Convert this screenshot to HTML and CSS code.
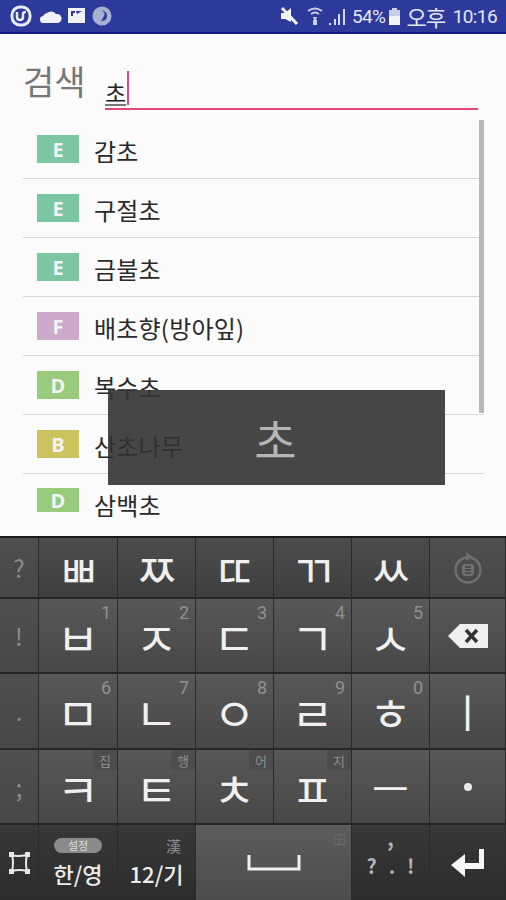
FILE: index.html
```html
<!DOCTYPE html>
<html>

<head>
    <title>검색</title>
    <link rel="stylesheet" href="styles.css">
</head>

<body>
    <!-- Status bar -->
    <header class="status-bar">
        <div class="status-left">
            <svg class="icon" width="22" height="24" viewBox="0 0 22 24">
                <rect x="2" y="3" width="18" height="18" rx="8" fill="none" stroke="#e8ebf6" stroke-width="3"/>
                <path d="M7 8v5q0 3 3 3t3-3V10q0-2 3-2" fill="none" stroke="#e8ebf6" stroke-width="2.500"/>
            </svg>
            <svg class="icon cloud" width="22" height="24" viewBox="0 0 22 24">
                <path d="M4 19a3.500 3.500 0 0 1-1-7 5 5 0 0 1 4-3 6 6 0 0 1 9 1 4.500 4.500 0 0 1 2 9z" fill="#f2f3fa"/>
            </svg>
            <svg class="icon picture" width="19" height="24" viewBox="0 0 19 24">
                <rect x="1" y="4" width="17" height="15" fill="#f2f3fa"/>
                <path d="M4 7h4v2H6v3H4zM9 7h6l-5 3z" fill="#2d3a9c"/>
            </svg>
            <svg class="icon" width="20" height="24" viewBox="0 0 20 24">
                <circle cx="10" cy="12" r="9.500" fill="#a9b0d0"/>
                <path d="M9 6q5 2 3 6t-3 5q6 0 6-5t-6-6z" fill="#2d3a9c"/>
            </svg>
        </div>
        <div class="status-right">
            <svg class="icon mute" width="20" height="22" viewBox="0 0 20 22">
                <path d="M2 8h4l6-5v14l-6-3H2z" fill="#f2f3fa"/>
                <path d="M3 3l15 16" stroke="#f2f3fa" stroke-width="3"/>
            </svg>
            <svg class="icon wifi" width="16" height="22" viewBox="0 0 16 22">
                <path d="M1 6q7-5 14 0M4 9q4-3 8 0" fill="none" stroke="#c9cee6" stroke-width="2"/>
                <path d="M6 12h4l-1 3h1v5H6v-5h1z" fill="#c9cee6"/>
            </svg>
            <svg class="icon signal" width="18" height="22" viewBox="0 0 18 22">
                <path d="M1 18h2v2H1zM6 14h2v6H6zM10 9h2v11h-2zM15 4h2v16h-2z" fill="#d5d8ec"/>
            </svg>
            <span class="status-text">54%</span>
            <svg class="icon battery" width="13" height="22" viewBox="0 0 13 22">
                <path d="M4 3h5v2H4z" fill="#c9cee6"/>
                <rect x="1" y="5" width="11" height="15" fill="#c9cee6"/>
                <rect x="1" y="11" width="11" height="9" fill="#f4f5fb"/>
            </svg>
            <span class="status-text meridiem">오후</span>
            <span class="status-text">10:16</span>
        </div>
    </header>

    <!-- Search -->
    <main class="content">
        <div class="search">
            <span class="search-label">검색</span>
            <div class="search-input"><span class="composing">초</span><span class="cursor"></span></div>
        </div>

        <ul class="result-list">
            <li class="result"><span class="badge badge-e">E</span><span class="name">감초</span></li>
            <li class="result"><span class="badge badge-e">E</span><span class="name">구절초</span></li>
            <li class="result"><span class="badge badge-e">E</span><span class="name">금불초</span></li>
            <li class="result"><span class="badge badge-f">F</span><span class="name">배초향(방아잎)</span></li>
            <li class="result"><span class="badge badge-d">D</span><span class="name">복수초</span></li>
            <li class="result"><span class="badge badge-b">B</span><span class="name">산초나무</span></li>
            <li class="result"><span class="badge badge-d">D</span><span class="name">삼백초</span></li>
        </ul>

        <div class="scrollbar"></div>
        <div class="key-preview">초</div>
    </main>

    <!-- Keyboard -->
    <section class="keyboard">
        <div class="key side">?</div>
        <div class="key double">ㅃ</div>
        <div class="key double">ㅉ</div>
        <div class="key double">ㄸ</div>
        <div class="key double">ㄲ</div>
        <div class="key double">ㅆ</div>
        <div class="key side">
            <svg width="34" height="38" viewBox="0 0 34 38">
                <circle cx="17" cy="21" r="12.500" fill="none" stroke="#6f6f6f" stroke-width="2.500"/>
                <path d="M15 3l7 5-7 4z" fill="#6f6f6f"/>
                <rect x="11" y="15" width="12" height="12" rx="3" fill="#6f6f6f"/>
                <path d="M14 18h6M14 21h6M14 24h6" stroke="#444" stroke-width="1.500"/>
            </svg>
        </div>

        <div class="key side">!</div>
        <div class="key">ㅂ<span class="hint">1</span></div>
        <div class="key">ㅈ<span class="hint">2</span></div>
        <div class="key">ㄷ<span class="hint">3</span></div>
        <div class="key">ㄱ<span class="hint">4</span></div>
        <div class="key">ㅅ<span class="hint">5</span></div>
        <div class="key">
            <svg width="42" height="26" viewBox="0 0 42 26">
                <path d="M13 1h28v24H13L1 13z" fill="#f0f0f0"/>
                <path d="M19 7l11 12M30 7L19 19" stroke="#333" stroke-width="3.500"/>
            </svg>
        </div>

        <div class="key side">.</div>
        <div class="key">ㅁ<span class="hint">6</span></div>
        <div class="key">ㄴ<span class="hint">7</span></div>
        <div class="key">ㅇ<span class="hint">8</span></div>
        <div class="key">ㄹ<span class="hint">9</span></div>
        <div class="key">ㅎ<span class="hint">0</span></div>
        <div class="key vowel">ㅣ</div>

        <div class="key side">;</div>
        <div class="key">ㅋ<span class="hint-box">집</span></div>
        <div class="key">ㅌ<span class="hint-box">행</span></div>
        <div class="key">ㅊ<span class="hint-box">어</span></div>
        <div class="key">ㅍ<span class="hint-box">지</span></div>
        <div class="key vowel">ㅡ</div>
        <div class="key">
            <span class="dot"></span>
        </div>

        <div class="key dark">
            <svg width="23" height="24" viewBox="0 0 23 24">
                <path d="M4 4q4 2 15 0q-2 8 0 16q-8-2-15 0q2-8 0-16z" fill="none" stroke="#e8e8e8" stroke-width="2"/>
                <path d="M1 1h5v5H1zM17 1h5v5h-5zM1 18h5v5H1zM17 18h5v5h-5z" fill="#e8e8e8"/>
            </svg>
        </div>
        <div class="key dark stacked">
            <span class="pill">설정</span>
            <span class="mode">한/영</span>
        </div>
        <div class="key dark stacked">
            <span class="han">漢</span>
            <span class="mode">12/기</span>
        </div>
        <div class="key space">
            <svg width="54" height="18" viewBox="0 0 54 18">
                <path d="M2 1v14h50V1" fill="none" stroke="#f0f0f0" stroke-width="3"/>
            </svg>
            <span class="space-mark">田</span>
        </div>
        <div class="key dark punct">
            <span class="comma">,</span>
            <span class="punct-row"><span>?</span><span>.</span><span>!</span></span>
        </div>
        <div class="key dark">
            <svg width="36" height="32" viewBox="0 0 36 32">
                <path d="M29 2h5v20H15v8L1 18 15 7v9h14z" fill="#f6f6f6"/>
            </svg>
        </div>
    </section>
</body>

</html>
```

FILE: styles.css
```css
/* General page styles */
body {
    margin: 0;
    width: 506px;
    height: 900px;
    overflow: hidden;
    display: flex;
    flex-direction: column;
    background-color: #fbfbfb;
    font-family: "Noto Sans CJK KR", "Noto Sans", sans-serif;
}

/* Status bar */
.status-bar {
    height: 32px;
    flex: none;
    display: flex;
    justify-content: space-between;
    align-items: center;
    padding: 0 9px 0 10px;
    background-color: #2d3a9c;
    border-bottom: 2px solid #101a86;
    color: #e4e7f5;
}

.status-left,
.status-right {
    display: flex;
    align-items: center;
}

.icon {
    display: block;
}

.cloud {
    margin: 0 5px 0 8px;
}

.picture {
    margin-right: 6px;
}

.mute {
    margin-right: 8px;
}

.wifi {
    margin-right: 5px;
}

.signal {
    margin-right: 6px;
}

.status-text {
    font-family: "Roboto", "Noto Sans CJK KR", sans-serif;
    font-size: 19px;
    letter-spacing: -0.6px;
}

.meridiem {
    font-size: 22px;
    margin-right: 7px;
}

.battery {
    margin: 0 5px 0 3px;
}

/* Search row and result list */
.content {
    position: relative;
    flex: 1;
    min-height: 0;
    overflow: hidden;
    padding-left: 23px;
}

.search {
    display: flex;
    align-items: flex-end;
    height: 76px;
}

.search-label {
    width: 82px;
    font-size: 34px;
    line-height: 46px;
    margin-bottom: 6px;
    color: #777;
}

.search-input {
    width: 373px;
    height: 36px;
    display: flex;
    align-items: flex-end;
    border-bottom: 2px solid #e2457f;
}

.composing {
    width: 22px;
    font-size: 23px;
    line-height: 32px;
    color: #222;
    text-decoration: underline;
    text-decoration-color: #777;
}

.cursor {
    width: 2px;
    height: 34px;
    margin-bottom: 3px;
    background-color: #e2457f;
}

.result-list {
    list-style: none;
    margin: 10px 0 0;
    padding: 0;
    width: 461px;
}

.result {
    height: 58px;
    display: flex;
    align-items: center;
    border-bottom: 1px solid #d9d9d9;
    padding-left: 14px;
    font-size: 24px;
    color: #2a2a2a;
}

.result:last-child {
    border-bottom: none;
}

.result:last-child .badge {
    height: 24px;
    margin-bottom: 6px;
}

.name {
    margin-top: 3px;
    letter-spacing: 0.2px;
}

.badge {
    width: 42px;
    height: 28px;
    flex: none;
    margin-right: 15px;
    display: flex;
    align-items: center;
    justify-content: center;
    font-family: "Open Sans", sans-serif;
    font-size: 20px;
    font-weight: 700;
    color: #f3f3f3;
}

.badge-e {
    background-color: #7cc6a2;
}

.badge-f {
    background-color: #ceaaca;
}

.badge-d {
    background-color: #99cb7c;
}

.badge-b {
    background-color: #cdc35d;
}

/* These two lie over the list */
.scrollbar {
    position: absolute;
    left: 479px;
    top: 86px;
    width: 5px;
    height: 293px;
    background-color: #b9b9b9;
}

.key-preview {
    position: absolute;
    left: 108px;
    top: 356px;
    width: 337px;
    height: 95px;
    display: flex;
    align-items: center;
    justify-content: center;
    background-color: rgba(50, 50, 50, 0.9);
    box-sizing: border-box;
    padding-right: 2px;
    font-size: 46px;
    color: #b5b5b5;
}

/* Keyboard */
.keyboard {
    flex: none;
    height: 362px;
    display: grid;
    grid-template-columns: 39px 79px 78px 78px 78px 78px 76px;
    grid-template-rows: 61px 75px 76px 75px 75px;
    background-color: #2a2a2a;
    border-top: 2px solid #1b1b1b;
}

.key {
    position: relative;
    display: flex;
    align-items: center;
    justify-content: center;
    box-sizing: border-box;
    border-right: 1px solid #2b2b2b;
    border-bottom: 2px solid #262626;
    background: linear-gradient(#585858, #474747);
    font-size: 46px;
    line-height: 1;
    color: #f0f0f0;
}

.double {
    font-size: 46px;
    letter-spacing: -1px;
    background: linear-gradient(#4c4c4c, #3f3f3f);
}

.vowel {
    font-size: 40px;
}

.side {
    font-size: 24px;
    color: #8c8c8c;
    background: linear-gradient(#4f4f4f, #474747);
}

.hint {
    position: absolute;
    top: 3px;
    right: 6px;
    font-family: "Roboto", sans-serif;
    font-size: 18px;
    line-height: 22px;
    color: #909090;
}

.hint-box {
    position: absolute;
    top: 0;
    right: 0;
    width: 24px;
    height: 20px;
    display: flex;
    align-items: center;
    justify-content: center;
    background-color: #4d4d4d;
    font-size: 13px;
    color: #8e8e8e;
}

.dot {
    width: 8px;
    height: 8px;
    border-radius: 50%;
    background-color: #e8e8e8;
}

.dark {
    background: linear-gradient(#383838, #2c2c2c);
    border-bottom: none;
}

.stacked {
    flex-direction: column;
    justify-content: flex-start;
    padding-top: 13px;
}

.pill {
    width: 48px;
    height: 15px;
    border-radius: 8px;
    display: flex;
    align-items: center;
    justify-content: center;
    background-color: #8a8a8a;
    font-size: 11px;
    color: #dcdcdc;
}

.han {
    align-self: flex-end;
    height: 15px;
    margin-right: 14px;
    font-size: 15px;
    line-height: 15px;
    color: #8a8a8a;
}

.mode {
    font-size: 22px;
    font-weight: 500;
    line-height: 30px;
    margin-top: 5px;
    color: #ececec;
}

.space {
    grid-column: span 2;
    background: linear-gradient(#5c5c5c, #4c4c4c);
    border-bottom: none;
}

.space-mark {
    position: absolute;
    top: 5px;
    right: 5px;
    font-size: 13px;
    line-height: 18px;
    color: #686868;
}

.punct {
    flex-direction: column;
    padding-bottom: 13px;
    font-weight: 700;
    font-size: 20px;
    color: #b4b4b4;
}

.comma {
    height: 14px;
    line-height: 4px;
    margin-bottom: 5px;
}

.punct-row {
    width: 48px;
    display: flex;
    justify-content: space-between;
    line-height: 22px;
}
```
